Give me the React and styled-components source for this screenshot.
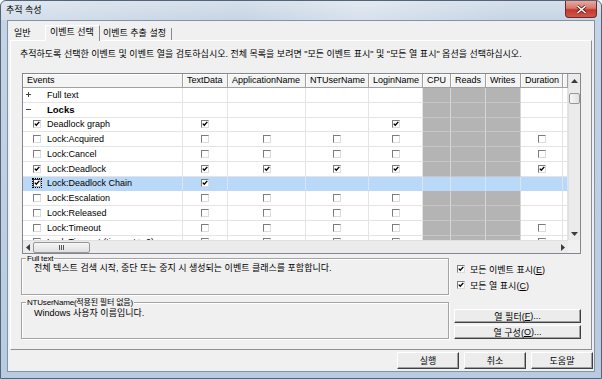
import React from "react";
import styled, { createGlobalStyle, css } from "styled-components";

const GlobalStyle = createGlobalStyle`
  html, body { margin:0; padding:0; background:#fff; }
  body {
    font-family: "Liberation Sans", "Noto Sans CJK KR", sans-serif;
    color:#000;
  }
`;

const columns = [
    { label: "Events", w: 160 },
    { label: "TextData", w: 45 },
    { label: "ApplicationName", w: 78 },
    { label: "NTUserName", w: 63 },
    { label: "LoginName", w: 54 },
    { label: "CPU", w: 28, gray: true },
    { label: "Reads", w: 35, gray: true },
    { label: "Writes", w: 35, gray: true },
    { label: "Duration", w: 42 },
    { label: "", w: 5 },
];

// cells: TextData, ApplicationName, NTUserName, LoginName, Duration  (null = no box)
const rows = [
    { cat: true, label: "Full text", open: false },
    { cat: true, label: "Locks", open: true },
    { label: "Deadlock graph", on: 1, cells: [1, null, null, 1, null] },
    { label: "Lock:Acquired", on: 0, cells: [0, 0, 0, 0, 0] },
    { label: "Lock:Cancel", on: 0, cells: [0, 0, 0, 0, 0] },
    { label: "Lock:Deadlock", on: 1, cells: [1, 1, 1, 1, 1] },
    { label: "Lock:Deadlock Chain", on: 1, cells: [1, null, null, null, null], selected: true },
    { label: "Lock:Escalation", on: 0, cells: [0, 0, 0, 0, null] },
    { label: "Lock:Released", on: 0, cells: [0, 0, 0, 0, null] },
    { label: "Lock:Timeout", on: 0, cells: [0, 0, 0, 0, 0] },
    { label: "Lock:Timeout (timeout > 0)", on: 0, cells: [0, 0, 0, 0, 0] },
];

// column index -> position in row.cells
const cellIndex = { 1: 0, 2: 1, 3: 2, 4: 3, 8: 4 };

const Check = ({ on, focus }) => (
    <Box $focus={focus}>
        {on ? (
            <svg width="6" height="6" viewBox="0 0 6 6">
                <polyline points="0.8,2.6 2.3,4.3 5.3,0.9" fill="none" stroke="#000" strokeWidth="1.4" />
            </svg>
        ) : null}
    </Box>
);

const Expander = ({ open }) => (
    <ExpIcon width="7" height="7" viewBox="0 0 7 7">
        <line x1="1" y1="3.5" x2="6" y2="3.5" stroke="#444" strokeWidth="1" />
        {!open && <line x1="3.5" y1="1" x2="3.5" y2="6" stroke="#444" strokeWidth="1" />}
    </ExpIcon>
);

const Arrow = ({ dir }) => {
    const pts = {
        up: "0,4 3.5,0 7,4",
        down: "0,0 3.5,4 7,0",
        left: "4,0 0,3.5 4,7",
        right: "0,0 4,3.5 0,7",
    }[dir];
    const vertical = dir === "up" || dir === "down";
    return (
        <svg width={vertical ? 7 : 4} height={vertical ? 4 : 7} viewBox={vertical ? "0 0 7 4" : "0 0 4 7"}>
            <polygon points={pts} fill="#3c3c3c" />
        </svg>
    );
};

const App = () => {
    return (
        <>
            <GlobalStyle />
            <Window>
                <TitleBar>
                    <Title>추적 속성</Title>
                    <CloseButton>
                        <svg width="11" height="9" viewBox="0 0 11 9">
                            <path d="M1.5 1 L9.5 8 M9.5 1 L1.5 8" stroke="#5a1a16" strokeWidth="3" />
                            <path d="M1.5 1 L9.5 8 M9.5 1 L1.5 8" stroke="#fff" strokeWidth="1.6" />
                        </svg>
                    </CloseButton>
                </TitleBar>
                <Client>
                    <TabStrip>
                        <Tab $w={35}>일반</Tab>
                        <Tab $w={55} $active>이벤트 선택</Tab>
                        <Tab $w={72} $last>이벤트 추출 설정</Tab>
                    </TabStrip>
                    <Panel>
                        <Desc>추적하도록 선택한 이벤트 및 이벤트 열을 검토하십시오. 전체 목록을 보려면 "모든 이벤트 표시" 및 "모든 열 표시" 옵션을 선택하십시오.</Desc>
                        <GridBox>
                            <DataArea>
                                <HeaderRow>
                                    {columns.map((c, i) => (
                                        <HeaderCell key={i} $w={c.w}>{c.label}</HeaderCell>
                                    ))}
                                </HeaderRow>
                                {rows.map((r, ri) => (
                                    <Row key={ri}>
                                        <EventCell $w={columns[0].w} $selected={r.selected}>
                                            <Slot>{r.cat && <Expander open={r.open} />}</Slot>
                                            <Slot $w={14}>{!r.cat && <Check on={r.on} focus={r.selected} />}</Slot>
                                            <EventLabel $bold={r.cat && r.open}>{r.label}</EventLabel>
                                        </EventCell>
                                        {columns.slice(1).map((c, ci) => {
                                            const idx = cellIndex[ci + 1];
                                            const v = r.cells && idx !== undefined ? r.cells[idx] : null;
                                            return (
                                                <Cell key={ci} $w={c.w} $gray={c.gray} $selected={r.selected}>
                                                    {v !== null && v !== undefined && <Check on={v} />}
                                                </Cell>
                                            );
                                        })}
                                    </Row>
                                ))}
                            </DataArea>
                            <VScroll>
                                <ScrollBtn><Arrow dir="up" /></ScrollBtn>
                                <VThumb />
                                <ScrollBtn $bottom><Arrow dir="down" /></ScrollBtn>
                            </VScroll>
                            <HScroll>
                                <HBtn><Arrow dir="left" /></HBtn>
                                <HThumb>
                                    <Grip />
                                </HThumb>
                                <HBtn $end><Arrow dir="right" /></HBtn>
                            </HScroll>
                            <Corner />
                        </GridBox>
                        <Bottom>
                            <LeftCol>
                                <GroupBox $mt={4}>
                                    <GroupLegend>Full text</GroupLegend>
                                    <GroupText $pt={3}>전체 텍스트 검색 시작, 중단 또는 중지 시 생성되는 이벤트 클래스를 포함합니다.</GroupText>
                                </GroupBox>
                                <GroupBox $mt={7}>
                                    <GroupLegend>NTUserName(적용된 필터 없음)</GroupLegend>
                                    <GroupText $pt={4}>Windows 사용자 이름입니다.</GroupText>
                                </GroupBox>
                            </LeftCol>
                            <RightCol>
                                <OptionRow>
                                    <Check on={1} />
                                    <span>모든 이벤트 표시(<u>E</u>)</span>
                                </OptionRow>
                                <OptionRow $mt={4}>
                                    <Check on={1} />
                                    <span>모든 열 표시(<u>C</u>)</span>
                                </OptionRow>
                                <WideButton $mt={18}>열 필터(<u>F</u>)...</WideButton>
                                <WideButton $mt={2}>열 구성(<u>O</u>)...</WideButton>
                            </RightCol>
                        </Bottom>
                    </Panel>
                    <Footer>
                        <Button>실행</Button>
                        <Button>취소</Button>
                        <Button>도움말</Button>
                    </Footer>
                </Client>
            </Window>
        </>
    );
};

const Window = styled.div`
    width:602px;
    height:379px;
    box-sizing:border-box;
    border:1px solid #52647a;
    border-radius:6px 6px 0 0;
    background:linear-gradient(180deg, #d6e0eb 0px, #c5d4e4 20px, #b8cbe0 100%);
    display:flex;
    flex-direction:column;
    padding:0 6px 6px;
    overflow:hidden;
`;

const TitleBar = styled.div`
    height:19px;
    margin:0 -6px;
    padding:0 4px 0 4px;
    display:flex;
    justify-content:space-between;
    align-items:flex-start;
    background:linear-gradient(90deg, rgba(255,255,255,0.25), rgba(255,255,255,0) 40%, rgba(255,255,255,0.3) 60%, rgba(255,255,255,0) 85%);
`;

const Title = styled.div`
    font-size:9px;
    line-height:19px;
    padding-left:1px;
`;

const CloseButton = styled.div`
    width:32px;
    height:17px;
    box-sizing:border-box;
    border:1px solid #6b2a24;
    border-top:none;
    border-radius:0 0 4px 4px;
    background:linear-gradient(180deg, #e9a99f 0%, #d7786c 45%, #c2392c 55%, #d1574a 100%);
    display:flex;
    align-items:center;
    justify-content:center;
`;

const Client = styled.div`
    flex:1;
    background:#f0f0f0;
    border:1px solid #8293a8;
    display:flex;
    flex-direction:column;
    padding:0 1px 0 2px;
`;

const TabStrip = styled.div`
    height:19px;
    display:flex;
    align-items:flex-end;
    flex-shrink:0;
`;

const Tab = styled.div`
    width:${({ $w }) => $w}px;
    height:12px;
    box-sizing:border-box;
    font-size:9px;
    line-height:11px;
    padding-left:4px;
    white-space:nowrap;
    ${({ $last }) => $last && css`
        border-right:1px solid #8a8a8a;
        padding-left:3px;
    `}
    ${({ $active }) => $active && css`
        height:16px;
        margin-bottom:-1px;
        position:relative;
        z-index:1;
        background:#f0f0f0;
        border-top:1px solid #fff;
        border-left:1px solid #fff;
        border-right:1px solid #8a8a8a;
        padding-left:4px;
        line-height:13px;
    `}
`;

const Panel = styled.div`
    height:310px;
    box-sizing:border-box;
    border:1px solid;
    border-color:#fff #8e8e8e #8e8e8e #fff;
    margin-right:1px;
    padding:7px 10px 0 10px;
    display:flex;
    flex-direction:column;
    flex-shrink:0;
`;

const Desc = styled.div`
    font-size:9px;
    line-height:12px;
    white-space:nowrap;
    margin-left:-1px;
`;

const GridBox = styled.div`
    margin-top:13px;
    margin-left:1px;
    width:559px;
    height:181px;
    box-sizing:border-box;
    border:1px solid #828790;
    background:#fff;
    display:grid;
    grid-template-columns:545px 12px;
    grid-template-rows:166px 13px;
`;

const DataArea = styled.div`
    overflow:hidden;
`;

const HeaderRow = styled.div`
    display:flex;
    height:14px;
`;

const HeaderCell = styled.div`
    width:${({ $w }) => $w}px;
    flex-shrink:0;
    box-sizing:border-box;
    border-right:1px solid #a0a0a0;
    border-bottom:1px solid #a0a0a0;
    box-shadow:inset 1px 1px 0 #fff;
    background:#f4f4f4;
    font-size:9px;
    line-height:13px;
    padding-left:4px;
    white-space:nowrap;
    overflow:hidden;
`;

const Row = styled.div`
    display:flex;
    height:14.75px;
`;

const Cell = styled.div`
    width:${({ $w }) => $w}px;
    flex-shrink:0;
    box-sizing:border-box;
    border-right:1px solid #e4e4e4;
    border-bottom:1px solid #e4e4e4;
    background:#fff;
    display:flex;
    align-items:center;
    justify-content:center;
    ${({ $gray }) => $gray && css`
        background:#b4b4b4;
        border-right-color:#d6d6d6;
        border-bottom-color:#c6c6c6;
    `}
    ${({ $selected }) => $selected && css`
        background:#bad9f8;
        border-right-color:#d6e6f6;
        border-bottom-color:#bad9f8;
    `}
`;

const EventCell = styled(Cell)`
    justify-content:flex-start;
    padding-left:2px;
`;

const Slot = styled.span`
    width:${({ $w }) => $w || 8}px;
    flex-shrink:0;
    display:flex;
    align-items:center;
`;

const ExpIcon = styled.svg`
    display:block;
`;

const EventLabel = styled.span`
    white-space:nowrap;
    font-weight:${({ $bold }) => ($bold ? 700 : 400)};
    font-size:${({ $bold }) => ($bold ? "9.5px" : "9px")};
`;

const Box = styled.span`
    width:8px;
    height:8px;
    box-sizing:border-box;
    flex-shrink:0;
    border:1px solid;
    border-color:#7c7c7c #dcdcdc #dcdcdc #7c7c7c;
    background:#fff;
    display:inline-flex;
    align-items:center;
    justify-content:center;
    ${({ $focus }) => $focus && css`
        outline:1px dotted #000;
        outline-offset:0px;
        border-color:#333 #aaa #aaa #333;
    `}
`;

const VScroll = styled.div`
    background:#ebebeb;
    border-left:1px solid #e0e0e0;
    display:flex;
    flex-direction:column;
    align-items:center;
`;

const ScrollBtn = styled.div`
    height:13px;
    width:100%;
    display:flex;
    align-items:center;
    justify-content:center;
    ${({ $bottom }) => $bottom && css`
        margin-top:auto;
    `}
`;

const VThumb = styled.div`
    margin-top:6px;
    width:11px;
    height:11px;
    box-sizing:border-box;
    border:1px solid #979797;
    border-radius:2px;
    background:linear-gradient(90deg, #f6f6f6, #e2e2e2);
`;

const HScroll = styled.div`
    background:#ebebeb;
    border-top:1px solid #e0e0e0;
    display:flex;
    align-items:center;
`;

const HBtn = styled.div`
    width:10px;
    height:100%;
    display:flex;
    align-items:center;
    justify-content:center;
    ${({ $end }) => $end && css`
        margin-left:auto;
    `}
`;

const HThumb = styled.div`
    width:57px;
    height:11px;
    box-sizing:border-box;
    border:1px solid #979797;
    border-radius:2px;
    background:linear-gradient(180deg, #f6f6f6, #e0e0e0);
    display:flex;
    align-items:center;
    justify-content:center;
`;

const Grip = styled.span`
    width:5px;
    height:5px;
    background:repeating-linear-gradient(90deg, #555 0px, #555 1px, transparent 1px, transparent 2px);
`;

const Corner = styled.div`
    background:#f0f0f0;
`;

const Bottom = styled.div`
    display:flex;
    gap:5px;
`;

const LeftCol = styled.div`
    width:428px;
    display:flex;
    flex-direction:column;
`;

const GroupBox = styled.div`
    position:relative;
    margin-top:${({ $mt }) => $mt}px;
    height:37px;
    box-sizing:border-box;
    border:1px solid #a3a3a3;
    box-shadow:inset 1px 1px 0 #fff, 1px 1px 0 #fff;
`;

const GroupLegend = styled.span`
    position:absolute;
    top:-5px;
    left:4px;
    padding:0 1px;
    background:#f0f0f0;
    font-size:8px;
    line-height:9px;
    letter-spacing:-0.2px;
    white-space:nowrap;
`;

const GroupText = styled.div`
    padding:${({ $pt }) => $pt}px 0 0 12px;
    font-size:9px;
    line-height:12px;
    white-space:nowrap;
`;

const RightCol = styled.div`
    width:127px;
    padding-top:9px;
    display:flex;
    flex-direction:column;
`;

const OptionRow = styled.div`
    margin-top:${({ $mt }) => $mt || 0}px;
    margin-left:3px;
    height:12px;
    display:flex;
    align-items:center;
    gap:5px;
    font-size:9px;
    white-space:nowrap;
`;

const buttonFace = css`
    box-sizing:border-box;
    border:1px solid;
    border-color:#fff #404040 #404040 #fff;
    box-shadow:inset -1px -1px 0 #a0a0a0;
    background:#ececec;
    font-size:9px;
    display:flex;
    align-items:center;
    justify-content:center;
    white-space:nowrap;
`;

const WideButton = styled.div`
    ${buttonFace}
    margin-top:${({ $mt }) => $mt}px;
    height:14px;
`;

const Footer = styled.div`
    flex:1;
    display:flex;
    justify-content:flex-end;
    align-items:flex-start;
    gap:5px;
    padding-top:2px;
`;

const Button = styled.div`
    ${buttonFace}
    width:62px;
    height:17px;
`;

export default App;
